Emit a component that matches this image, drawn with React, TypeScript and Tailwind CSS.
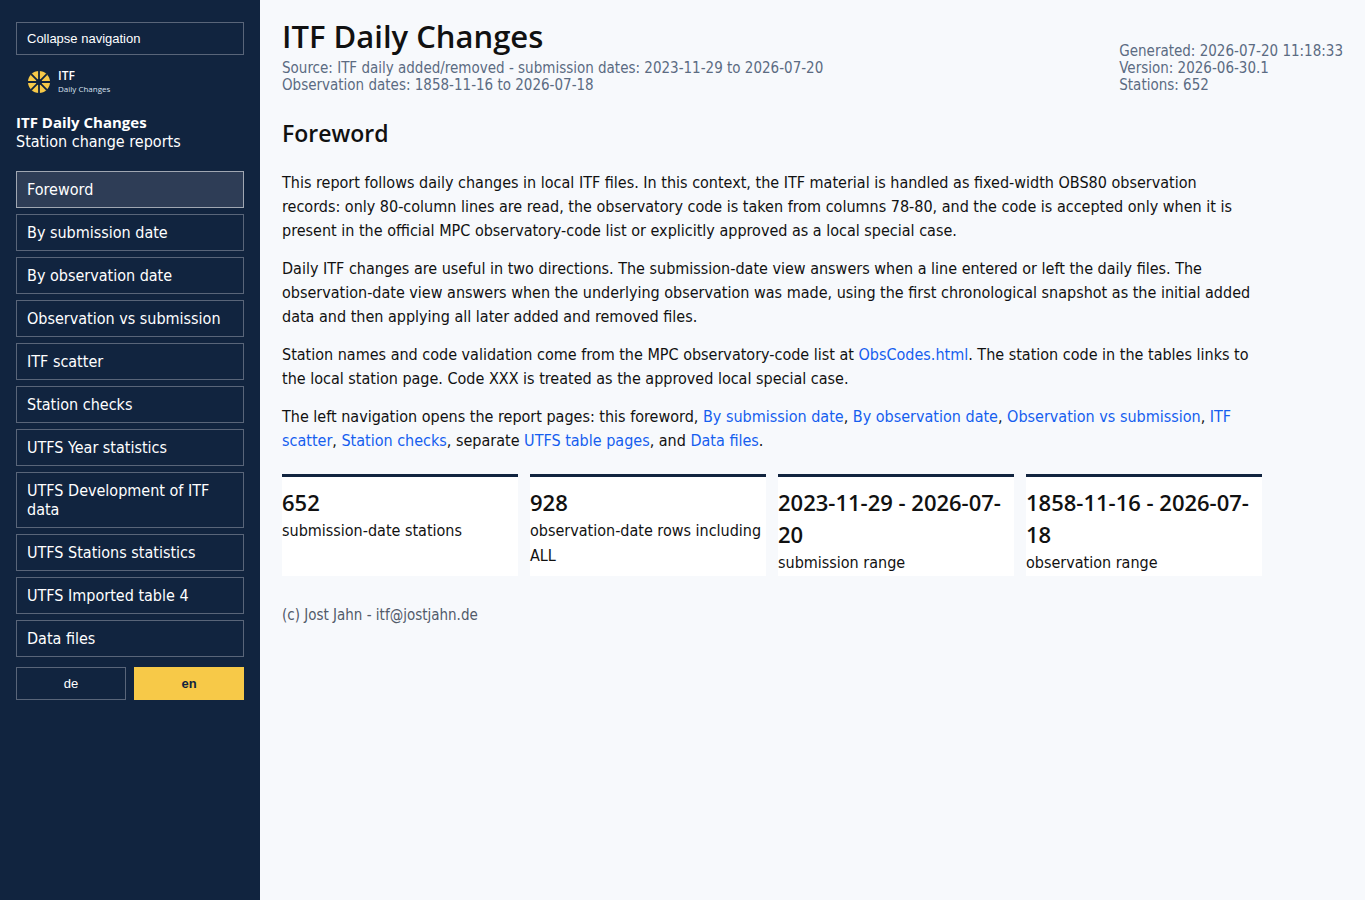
import { useState } from 'react';
import clsx from 'clsx';

const navItems = [
  'Foreword',
  'By submission date',
  'By observation date',
  'Observation vs submission',
  'ITF scatter',
  'Station checks',
  'UTFS Year statistics',
  'UTFS Development of ITF data',
  'UTFS Stations statistics',
  'UTFS Imported table 4',
  'Data files',
];

const metrics = [
  { value: '652', label: 'submission-date stations' },
  { value: '928', label: 'observation-date rows including ALL' },
  { value: '2023-11-29 - 2026-07-20', label: 'submission range' },
  { value: '1858-11-16 - 2026-07-18', label: 'observation range' },
];

function TextLink({ children }: { children: string }) {
  return (
    <a href="#" className="text-[#155eef] hover:underline">
      {children}
    </a>
  );
}

function Logo() {
  return (
    <div className="mt-3.5 flex items-center gap-2 pl-3">
      <svg viewBox="0 0 22 22" className="h-[22px] w-[22px]" aria-hidden="true">
        <circle cx="11" cy="11" r="11" fill="#f7c948" />
        <path
          d="M11 0V22M0 11H22M3.2 3.2L18.8 18.8M18.8 3.2L3.2 18.8"
          stroke="#11243f"
          strokeWidth="1.8"
        />
        <circle cx="11" cy="11" r="3" fill="#11243f" />
      </svg>
      <div className="font-['Open_Sans',sans-serif]">
        <div className="text-xs leading-[14px] font-semibold">ITF</div>
        <div className="text-[8px] leading-3 text-[#d9e2ef]">Daily Changes</div>
      </div>
    </div>
  );
}

function Sidebar() {
  const [active, setActive] = useState('Foreword');
  const [lang, setLang] = useState('en');
  const [open, setOpen] = useState(true);

  return (
    <aside className="w-[260px] shrink-0 bg-[#11243f] px-4 py-[22px] text-white">
      <button
        type="button"
        onClick={() => setOpen(!open)}
        className="block h-[33px] w-full border border-[#596579] px-2.5 text-left font-['Liberation_Sans',sans-serif] text-[13px]"
      >
        {open ? 'Collapse navigation' : 'Expand navigation'}
      </button>

      {open && (
        <>
          <Logo />
          <div className="mt-[17px] leading-5">
            <strong className="block font-['Open_Sans',sans-serif] text-[15px] leading-5 font-bold">
              ITF Daily Changes
            </strong>
            <span>Station change reports</span>
          </div>

          <nav className="mt-[19px] flex flex-col gap-1.5">
            {navItems.map((item) => (
              <a
                key={item}
                href="#"
                onClick={() => setActive(item)}
                className={clsx(
                  'border px-2.5 py-2 leading-[19px]',
                  item === active ? 'border-[#a0a7b2] bg-[#2e3d56]' : 'border-[#596579]'
                )}
              >
                {item}
              </a>
            ))}
          </nav>

          <div className="mt-2.5 grid grid-cols-2 gap-2">
            {['de', 'en'].map((code) => (
              <button
                key={code}
                type="button"
                onClick={() => setLang(code)}
                className={clsx(
                  "h-[33px] border font-['Liberation_Sans',sans-serif] text-[13px]",
                  code === lang ? 'border-[#f7c948] bg-[#f7c948] font-bold text-[#11243f]' : 'border-[#596579]'
                )}
              >
                {code}
              </button>
            ))}
          </div>
        </>
      )}
    </aside>
  );
}

export default function App() {
  return (
    <div className="flex min-h-screen bg-[#f7f9fc] font-['DejaVu_Sans_Condensed','Open_Sans',sans-serif] text-base text-[#111]">
      <Sidebar />

      <main className="min-w-0 flex-1 px-[22px] pt-4 pb-6">
        <header className="flex items-end justify-between gap-6">
          <div>
            <h1 className="mb-1 font-['Open_Sans',sans-serif] text-[31px] leading-10 font-semibold">
              ITF Daily Changes
            </h1>
            <div className="text-[15px] leading-[17px] text-[#5b6b82]">
              Source: ITF daily added/removed - submission dates: 2023-11-29 to 2026-07-20
              <br />
              Observation dates: 1858-11-16 to 2026-07-18
            </div>
          </div>
          <div className="text-[15px] leading-[17px] text-[#5b6b82]">
            Generated: 2026-07-20 11:18:33
            <br />
            Version: 2026-06-30.1
            <br />
            Stations: 652
          </div>
        </header>

        <section className="mt-[23px] max-w-[980px]">
          <h2 className="font-['Open_Sans',sans-serif] text-[23px] leading-8 font-semibold">Foreword</h2>
          <div className="mt-[22px] flex max-w-[970px] flex-col gap-3.5 leading-6">
            <p>
              This report follows daily changes in local ITF files. In this context, the ITF material is handled as
              fixed-width OBS80 observation records: only 80-column lines are read, the observatory code is taken from
              columns 78-80, and the code is accepted only when it is present in the official MPC observatory-code list
              or explicitly approved as a local special case.
            </p>
            <p>
              Daily ITF changes are useful in two directions. The submission-date view answers when a line entered or
              left the daily files. The observation-date view answers when the underlying observation was made, using
              the first chronological snapshot as the initial added data and then applying all later added and removed
              files.
            </p>
            <p>
              Station names and code validation come from the MPC observatory-code list at{' '}
              <TextLink>ObsCodes.html</TextLink>. The station code in the tables links to the local station page. Code
              XXX is treated as the approved local special case.
            </p>
            <p>
              The left navigation opens the report pages: this foreword, <TextLink>By submission date</TextLink>,{' '}
              <TextLink>By observation date</TextLink>, <TextLink>Observation vs submission</TextLink>,{' '}
              <TextLink>ITF scatter</TextLink>, <TextLink>Station checks</TextLink>, separate{' '}
              <TextLink>UTFS table pages</TextLink>, and <TextLink>Data files</TextLink>.
            </p>
          </div>

          <div className="mt-[21px] grid grid-cols-4 gap-3">
            {metrics.map((metric) => (
              <div key={metric.label} className="border-t-3 border-[#11243f] bg-white pt-[9px] pb-px">
                <strong className="block font-['Open_Sans',sans-serif] text-[22px] leading-8 font-semibold">
                  {metric.value}
                </strong>
                <span className="block leading-[25px]">{metric.label}</span>
              </div>
            ))}
          </div>
        </section>

        <footer className="mt-[29px] text-[15px] leading-5 text-[#525b6a]">(c) Jost Jahn - itf@jostjahn.de</footer>
      </main>
    </div>
  );
}
